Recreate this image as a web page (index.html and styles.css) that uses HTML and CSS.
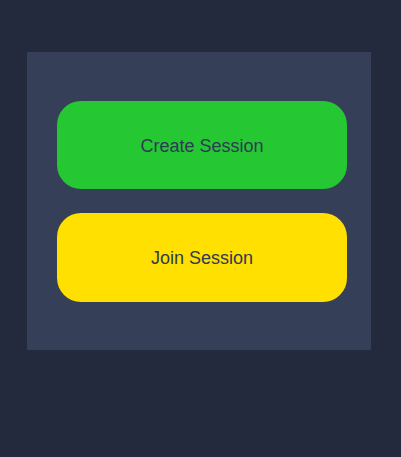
FILE: index.html
```html
<!DOCTYPE html>
<html>
<head>
<meta charset="utf-8">
<link rel="stylesheet" href="styles.css">
</head>
<body>
<div class="panel">
  <button class="btn btn-create">Create Session</button>
  <button class="btn btn-join">Join Session</button>
</div>
</body>
</html>
```
FILE: styles.css
```css
html, body {
  margin: 0;
  padding: 0;
  background: #232a3d;
  height: 100%;
}
body {
  padding: 52px 0 0 27px;
  box-sizing: border-box;
  font-family: "Liberation Sans", Arial, sans-serif;
}
.panel {
  width: 344px;
  height: 298px;
  box-sizing: border-box;
  background: #363f58;
  padding: 48.7px 24px 0 30px;
  display: flex;
  flex-direction: column;
  gap: 24px;
}
.btn {
  width: 290px;
  height: 88.5px;
  flex: none;
  border: none;
  border-radius: 24px;
  font-family: "Liberation Sans", Arial, sans-serif;
  font-size: 18px;
  color: #2f3a55;
  padding: 3px 0 0;
  margin: 0;
}
.btn-create { background: #25c833; }
.btn-join { background: #ffe000; }
```
